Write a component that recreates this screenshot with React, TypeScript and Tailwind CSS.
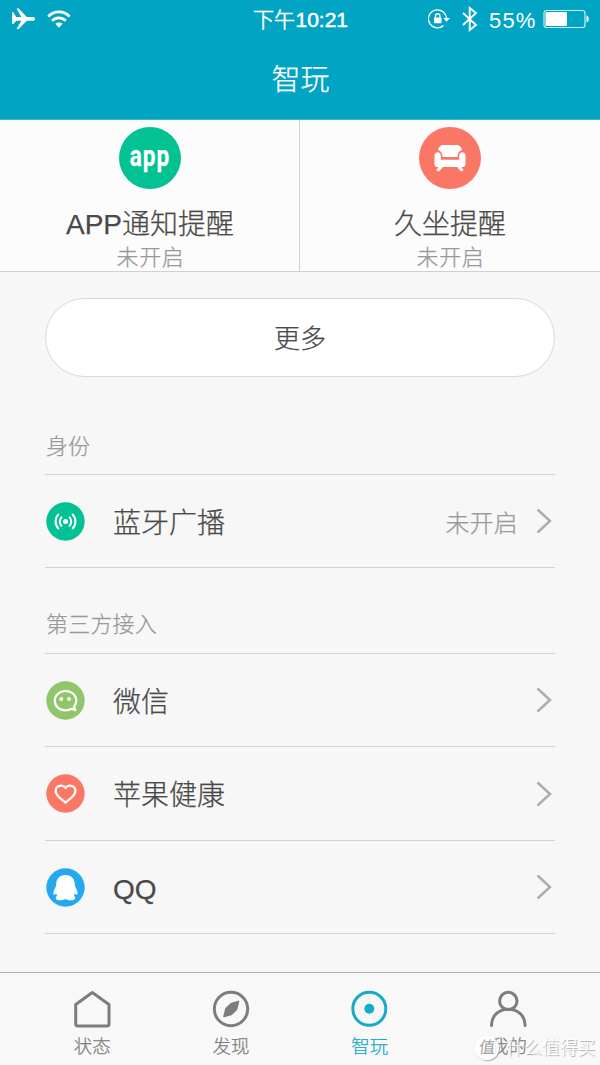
import type { ReactNode } from "react";

function StatusBar() {
  return (
    <div className="relative flex h-10 items-center justify-between pr-[10px] pl-3 text-white">
      <div className="flex items-center gap-3">
        <svg className="-mt-[2px]" width="23" height="22" viewBox="0 0 23 22" fill="currentColor">
          <path d="M0 4.2h1.3L4.2 9h5.1L4.6.5h2.1L14.8 9h5.9c1.3 0 2.3.7 2.3 1.9s-1 1.9-2.3 1.9h-5.9L6.7 21H4.6l4.7-8.3H4.2L1.3 16H0z" />
        </svg>
        <svg className="-mt-[2px]" width="24" height="18" viewBox="0 0 24 18" fill="none" stroke="currentColor" strokeWidth="2.7">
          <path d="M1.2 6.6C7.2 .4 16.6.4 22.6 6.6" />
          <path d="M5 10.8c4-4 9.8-4 13.8 0" />
          <path d="M8.3 13.8c2-1.9 5.2-1.9 7.2 0L11.9 17.7z" fill="currentColor" stroke="none" />
        </svg>
      </div>
      <div className="absolute top-0 left-[253px] flex h-10 items-center text-[21px] whitespace-nowrap">
        <span className="[-webkit-text-stroke:0.6px_white]">下午</span>
        <span className="ml-[0.5px] [-webkit-text-stroke:0.5px_white]">10:21</span>
      </div>
      <div className="flex items-center">
        <svg className="-mt-[2px]" width="22" height="20" viewBox="0 0 22 20" fill="none" stroke="currentColor" strokeWidth="1.3">
          <path d="M17.7 6.2A9 9 0 1 0 15.5 16.5M17.7 6.2c.7 1.4 1 2.5 1 4" />
          <path d="M15.5 9h6.500L18.500 12.800z" fill="currentColor" stroke="none" />
          <rect x="6" y="8.5" width="7.5" height="5.8" rx=".7" fill="currentColor" stroke="none" />
          <path d="M7.5 9V7c0-3 4.5-3 4.5 0v2" strokeWidth="1.3" />
        </svg>
        <svg className="-mt-[2px] ml-[12px]" width="16" height="26" viewBox="0 0 16 26" fill="none" stroke="currentColor" strokeWidth="1.9">
          <path d="m1 7 13 12-6.300 5V2L14 7 1 19" />
        </svg>
        <span className="ml-[11px] w-[48px] text-[22px] tracking-[1.200px] [-webkit-text-stroke:0]">55%</span>
        <svg className="-mt-[2px] ml-[6px]" width="47" height="20" viewBox="0 0 47 20" fill="none">
          <rect x="1" y="1.5" width="41" height="17" rx="2.5" stroke="white" strokeOpacity=".8" strokeWidth="1.2" />
          <rect x="2.5" y="3" width="21.5" height="14" rx="1" fill="white" />
          <path d="M43.500 6.500c3 .5 3 6.500 0 7z" fill="white" />
        </svg>
      </div>
    </div>
  );
}

function AppIcon() {
  return (
    <div className="flex size-[62px] items-center justify-center rounded-full bg-[#02c294]">
      <span className="mt-[-3px] scale-x-[0.78] font-['Roboto'] text-[29px] leading-none font-bold tracking-[1.300px] text-white">app</span>
    </div>
  );
}

function SofaIcon() {
  return (
    <svg width="62" height="62" viewBox="0 0 62 62">
      <circle cx="31" cy="31" r="31" fill="#fa7765" />
      <g fill="white">
        <path d="M24.500 18h13c3 0 5 2 5.500 5-3 1-4.500 3-4.500 7h-15c0-4-1.500-6-4.500-7 .5-3 2.500-5 5.500-5z" />
        <path d="M15.500 28.500c0-4.500 6.300-4.500 6.300 0v4.200h18.400v-4.200c0-4.500 6.300-4.500 6.300 0v8.500c0 2-1 3-3 3h-25c-2 0-3-1-3-3z" />
        <path d="m20.500 38.500-3 4.500c.8 1.700 2.600 1.700 3.500.5l4-5zM41.500 38.500l3 4.500c-.8 1.700-2.600 1.700-3.500.5l-4-5z" />
      </g>
    </svg>
  );
}

function FeatureCard({ icon, title }: { icon: ReactNode; title: string }) {
  return (
    <div className="flex h-[151px] w-[300px] flex-col items-center pt-[7px]">
      {icon}
      <div className="mt-[20px] h-8 text-[28px] leading-8 text-[#4a4a4a]">{title}</div>
      <div className="mt-[5px] pl-[1px] text-[22px] leading-6 tracking-[0.6px] text-[#999]">未开启</div>
    </div>
  );
}

function Disc({ color, children }: { color: string; children: ReactNode }) {
  return (
    <svg width="39" height="39" viewBox="0 0 39 39">
      <circle cx="19.500" cy="19.500" r="19.200" fill={color} />
      {children}
    </svg>
  );
}

function Row({ icon, label, value, height }: { icon: ReactNode; label: string; value?: string; height: string }) {
  return (
    <div className={`flex items-center border-b border-[#d3d3d3] pl-[1px] ${height}`}>
      {icon}
      <span className="ml-7 flex-1 pt-[5px] text-[28px] text-[#4a4a4a]">{label}</span>
      {value && <span className="mr-[18px] pt-[5px] text-[24px] tracking-[0.2px] text-[#999]">{value}</span>}
      <svg className="mr-[3px]" width="16" height="26" viewBox="0 0 16 26" fill="none" stroke="#adadad" strokeWidth="2.500">
        <path d="M1.500 1.500 14 13 1.500 24.500" />
      </svg>
    </div>
  );
}

function Tab({ icon, label, active }: { icon: ReactNode; label: string; active?: boolean }) {
  return (
    <div className={`flex w-[138.700px] flex-col items-center pt-[17px] ${active ? "text-[#16a9c8]" : "text-[#7d7d7d]"}`}>
      <svg width="38" height="38" viewBox="0 0 38 38" fill="none" stroke="currentColor" strokeWidth="3" strokeLinejoin="round" strokeLinecap="round">
        {icon}
      </svg>
      <span className="mt-[7px] pl-[1px] text-[18.500px] leading-6">{label}</span>
    </div>
  );
}

export default function App() {
  return (
    <div className="relative flex h-[1065px] w-[600px] flex-col overflow-hidden bg-[#f7f7f7] font-['Liberation_Sans','Noto_Sans_CJK_SC',sans-serif] font-light [-webkit-text-stroke:0.25px_currentcolor]">
      <header className="h-[120px] shrink-0 border-b border-[#33b5cd] bg-[#01a4c3] text-white">
        <StatusBar />
        <h1 className="pt-[20px] pl-[1px] text-center text-[29px] leading-10">智玩</h1>
      </header>

      <section className="flex h-[152px] shrink-0 border-b border-[#d0d0d0] bg-[#fcfcfc]">
        <FeatureCard icon={<AppIcon />} title="APP通知提醒" />
        <div className="-ml-px w-px bg-[#d0d0d0]" />
        <FeatureCard icon={<SofaIcon />} title="久坐提醒" />
      </section>

      <main className="flex-1 px-[45px] pt-[26px]">
        <button className="block h-[79px] w-full rounded-full border border-[#d9d9d9] bg-white pt-[3px] text-[26px] text-[#4a4a4a]">更多</button>

        <h2 className="mt-[54px] h-[44px] border-b border-[#d3d3d3] pl-px text-[22px] leading-8 text-[#999]">身份</h2>
        <Row
          height="h-[93px]"
          label="蓝牙广播"
          value="未开启"
          icon={
            <Disc color="#02c294">
              <circle cx="19.500" cy="19.500" r="2.500" fill="white" />
              <path d="M16 14.800c-3 2.500-3 6.900 0 9.400M12.800 12c-4.300 4-4.300 11 0 15M23 14.800c3 2.500 3 6.900 0 9.400M26.200 12c4.300 4 4.300 11 0 15" fill="none" stroke="white" strokeWidth="2" />
            </Disc>
          }
        />

        <h2 className="mt-[41px] h-[45px] border-b border-[#d3d3d3] pl-px text-[22px] leading-8 tracking-[0.2px] text-[#999]">第三方接入</h2>
        <Row
          height="h-[93px]"
          label="微信"
          icon={
            <Disc color="#8fc66a">
              <path d="M25.800 27.700c-2 1.200-4 1.600-6.300 1.600-6.200 0-10.700-4-10.700-9.500S13.300 10 19.500 10s10.800 4.200 10.800 9.700c0 2.300-.9 4.300-2.200 5.900l1.200 3.600z" fill="none" stroke="white" strokeWidth="2.200" strokeLinejoin="round" />
              <circle cx="15.300" cy="18" r="1.900" fill="white" />
              <circle cx="23" cy="18" r="1.900" fill="white" />
            </Disc>
          }
        />
        <Row
          height="h-[94px]"
          label="苹果健康"
          icon={
            <Disc color="#fa7765">
              <path d="M19.500 14c-2.500-3.800-9.900-2.700-9.900 3 0 5.200 6.900 8.600 9.900 11.800 3-3.200 9.900-6.600 9.900-11.800 0-5.700-7.400-6.800-9.900-3z" fill="none" stroke="white" strokeWidth="2.200" strokeLinejoin="round" />
            </Disc>
          }
        />
        <Row
          height="h-[93px]"
          label="QQ"
          icon={
            <Disc color="#24a9f0">
              <path d="M19.500 7c-6 0-9.300 4.200-9.300 9.300 0 2.600-2 4.800-2.600 7.200-.5 2-.2 3.500.7 3.300.7-.2 1.300-.8 2-1.400.2.900.4 1.600.9 2.300-2.600 1.700-1.500 4.500 2.300 4.500 2.200 0 4.800-.2 6-1.200 1.200 1 3.800 1.200 6 1.200 3.800 0 4.900-2.800 2.300-4.500.5-.7.7-1.400.9-2.300.7.600 1.300 1.200 2 1.400.9.200 1.200-1.300.7-3.300-.6-2.400-2.600-4.600-2.600-7.200 0-5.100-3.300-9.300-9.300-9.300z" fill="white" />
            </Disc>
          }
        />
      </main>

      <nav className="flex h-[93px] shrink-0 border-t border-[#b2b2b2] bg-[#f8f8f8] pl-[22.500px]">
        <Tab label="状态" icon={<path d="M19.300 2.500 36 14.500V34c0 1.300-.7 2-2 2H4.700c-1.300 0-2-.7-2-2V14.500z" />} />
        <Tab
          label="发现"
          icon={
            <>
              <circle cx="19" cy="19" r="16.700" />
              <path d="M26.500 11.500 24.500 19.500 19.300 24.500 12 26.500 14 18.500 19.200 13.500z" fill="currentColor" strokeWidth="1.500" />
            </>
          }
        />
        <Tab
          label="智玩"
          active
          icon={
            <>
              <circle cx="19.300" cy="18.800" r="16.500" />
              <circle cx="19.300" cy="18.800" r="5" fill="currentColor" stroke="none" />
            </>
          }
        />
        <Tab
          label="我的"
          icon={
            <>
              <circle cx="19.300" cy="11" r="8.700" />
              <path d="M2.500 35.500C2.500 25.500 9.800 19.300 19.300 19.300S36.100 25.500 36.100 35.500" />
            </>
          }
        />
      </nav>

      <div className="absolute top-[1036px] left-[475px] flex items-center text-[18px] leading-6 whitespace-nowrap text-white">
        <span className="flex size-[24px] items-center justify-center rounded-full bg-white/90 text-[16px] text-[#999] shadow-[1px_1px_1px_#aaa]">
          <span className="-skew-x-6">值</span>
        </span>
        <span className="ml-[7px] tracking-[-0.1px] [text-shadow:1px_1px_1px_#999]">什么值得买</span>
      </div>
    </div>
  );
}
